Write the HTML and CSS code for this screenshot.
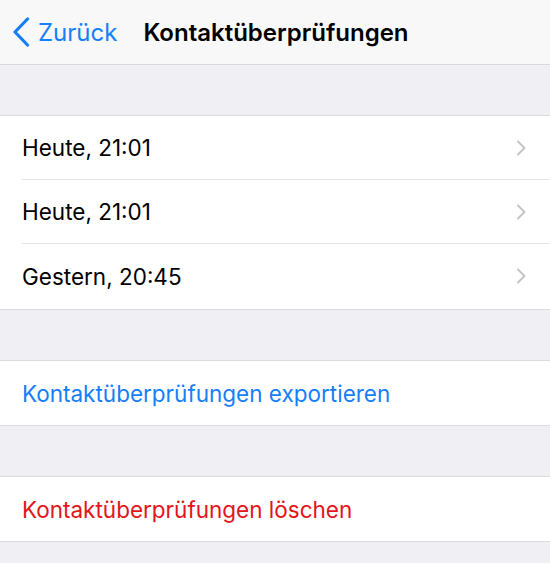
FILE: index.html
```html
<!DOCTYPE html>
<html lang="de">
<head>
    <meta charset="UTF-8">
    <meta name="viewport" content="width=device-width, initial-scale=1.0">
    <title>Kontaktüberprüfungen</title>
    <link rel="stylesheet" href="styles.css">
</head>
<body>

<header class="navbar">
    <a class="back" href="#">
        <svg class="back-icon" width="18" height="30" viewBox="0 0 18 30">
            <path d="M15.5 2 L3 15 L15.5 28" fill="none" stroke="currentColor" stroke-width="3.2" stroke-linecap="round" stroke-linejoin="round"/>
        </svg>
        <span>Zurück</span>
    </a>
    <h1 class="title">Kontaktüberprüfungen</h1>
</header>

<ul class="group">
    <li class="row">
        <span>Heute, 21:01</span>
        <svg class="chevron" width="10" height="16" viewBox="0 0 10 16"><path d="M2 1.5 L8.5 8 L2 14.5" fill="none" stroke="currentColor" stroke-width="2" stroke-linecap="round" stroke-linejoin="round"/></svg>
    </li>
    <li class="row">
        <span>Heute, 21:01</span>
        <svg class="chevron" width="10" height="16" viewBox="0 0 10 16"><path d="M2 1.5 L8.5 8 L2 14.5" fill="none" stroke="currentColor" stroke-width="2" stroke-linecap="round" stroke-linejoin="round"/></svg>
    </li>
    <li class="row">
        <span>Gestern, 20:45</span>
        <svg class="chevron" width="10" height="16" viewBox="0 0 10 16"><path d="M2 1.5 L8.5 8 L2 14.5" fill="none" stroke="currentColor" stroke-width="2" stroke-linecap="round" stroke-linejoin="round"/></svg>
    </li>
</ul>

<ul class="group">
    <li class="row action">Kontaktüberprüfungen exportieren</li>
</ul>

<ul class="group">
    <li class="row danger">Kontaktüberprüfungen löschen</li>
</ul>

</body>
</html>
```

FILE: styles.css
```css
body {
    margin: 0;
    background: #efeff4;
    font-family: 'Inter', 'Roboto', sans-serif;
    color: #000;
}
.navbar {
    height: 64px;
    background: #f8f8f9;
    border-bottom: 1px solid #d9d9dd;
    display: flex;
    align-items: center;
    padding: 0 0 0 12px;
}
.back {
    display: flex;
    align-items: center;
    gap: 8px;
    color: #157efb;
    text-decoration: none;
    font-size: 24px;
}
.back-icon { display: block; }
.title {
    margin: 0 0 0 26px;
    font-size: 24px;
    font-weight: 600;
}
.group {
    list-style: none;
    margin: 50px 0 0;
    padding: 0 0 0 22px;
    background: #fff;
    border-top: 1px solid #dcdce0;
    border-bottom: 1px solid #dcdce0;
}
.group:first-of-type { padding-bottom: 1px; }
.row {
    box-sizing: border-box;
    height: 64px;
    display: flex;
    align-items: center;
    justify-content: space-between;
    padding-right: 24px;
    font-size: 22.5px;
    border-bottom: 1px solid #e3e3e6;
}
.row:last-child { border-bottom: none; }
.chevron { color: #c4c4c8; display: block; }
.action { color: #157efb; }
.danger { color: #e3141a; }
```
